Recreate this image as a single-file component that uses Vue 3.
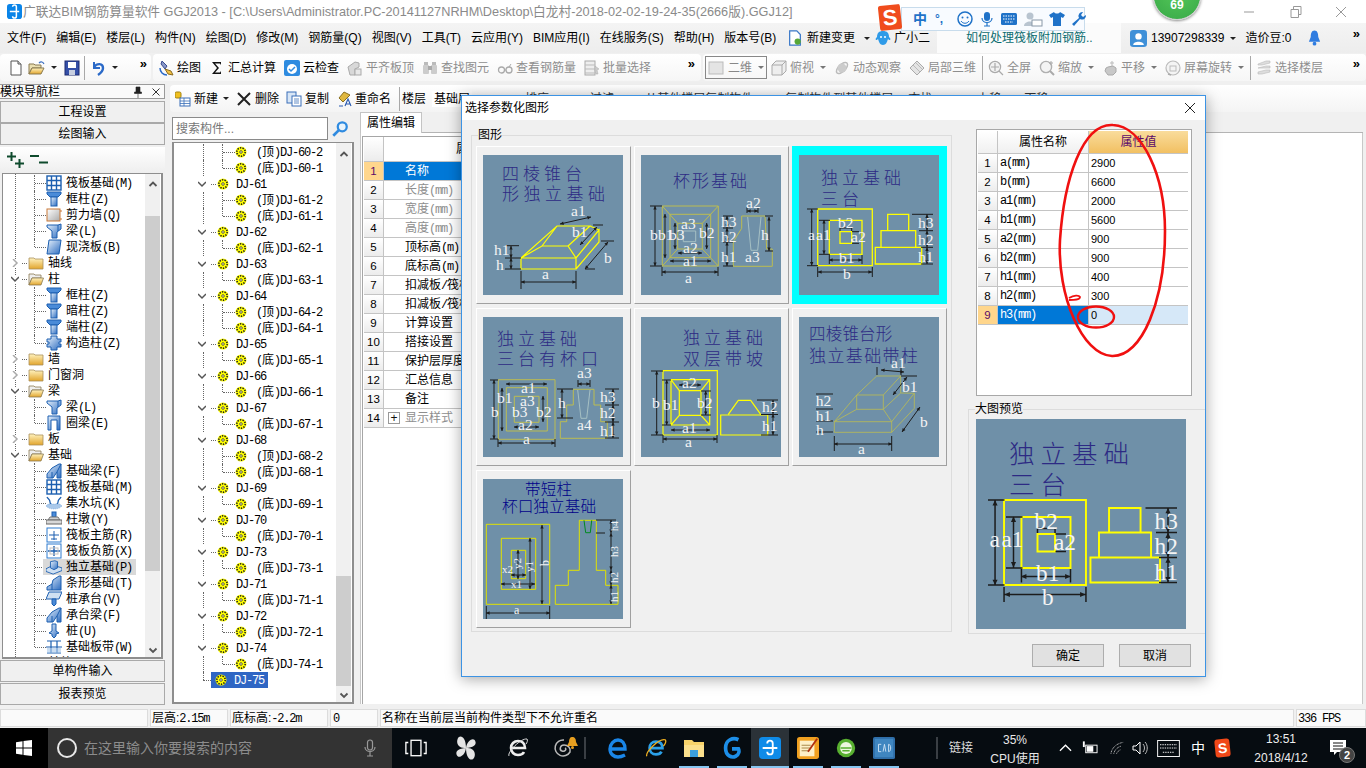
<script setup>
const seg = (s) => (s.match(/[\x00-\x7f]+|[^\x00-\x7f]+/g) || []).map((t) => ({ t, lat: /^[\x00-\x7f]/.test(t) }))

const menus = ['文件(F)', '编辑(E)', '楼层(L)', '构件(N)', '绘图(D)', '修改(M)', '钢筋量(Q)', '视图(V)', '工具(T)', '云应用(Y)', 'BIM应用(I)', '在线服务(S)', '帮助(H)', '版本号(B)']

const tools2 = [
  { ic: 'draw', t: '绘图' }, { ic: 'sum', t: '汇总计算' }, { ic: 'cloud', t: '云检查' },
  { ic: 'flat', t: '平齐板顶', g: 1 }, { ic: 'bino', t: '查找图元', g: 1 }, { ic: 'glass', t: '查看钢筋量', g: 1 }, { ic: 'batch', t: '批量选择', g: 1 }
]
const tools3 = [
  { ic: 'cube', t: '俯视', g: 1, a: 1 }, { ic: 'orbit', t: '动态观察', g: 1 }, { ic: 'local', t: '局部三维', g: 1 }, { sep: 1 },
  { ic: 'full', t: '全屏', g: 1 }, { ic: 'zoom', t: '缩放', g: 1, a: 1 }, { ic: 'pan', t: '平移', g: 1, a: 1 }, { ic: 'rot', t: '屏幕旋转', g: 1, a: 1 }, { sep: 1 },
  { ic: 'layer', t: '选择楼层', g: 1 }
]
const actions = [
  { ic: 'newc', t: '新建', a: 1 }, { ic: 'del', t: '删除' }, { ic: 'copy', t: '复制' }, { ic: 'rename', t: '重命名' }
]
const hiddenActions = [['排序', 47], ['过滤', 35], ['从其他楼层复制构件', 25], ['复制构件到其他楼层', 26], ['查找', 9], ['上移', 39], ['下移', 17]]

const c = (ic, t, extra = {}) => ({ ic, t, child: 1, ...extra })
const f = (t, open) => ({ ic: open ? 'fopen' : 'fclosed', t, open, folder: 1 })
const navRows = [
  c('raft', '筏板基础(M)'), c('col', '框柱(Z)'), c('wall', '剪力墙(Q)'), c('beam', '梁(L)'), c('slab', '现浇板(B)', { last: 1 }),
  f('轴线'), f('柱', 1), c('col', '框柱(Z)'), c('col', '暗柱(Z)'), c('col', '端柱(Z)'), c('gzz', '构造柱(Z)', { last: 1 }),
  f('墙'), f('门窗洞'), f('梁', 1), c('beam', '梁(L)'), c('ring', '圈梁(E)', { last: 1 }), f('板'), f('基础', 1),
  c('fbeam', '基础梁(F)'), c('raft', '筏板基础(M)'), c('pit', '集水坑(K)'), c('pier', '柱墩(Y)'), c('mainbar', '筏板主筋(R)'), c('negbar', '筏板负筋(X)'),
  c('iso', '独立基础(P)', { sel: 1 }), c('strip', '条形基础(T)'), c('cap', '桩承台(V)'), c('fbeam', '承台梁(F)'), c('pile', '桩(U)'), c('band', '基础板带(W)', { last: 1 }),
  f('其他')
]

const djGroups = [
  [60, ['顶2', '底1'], true], [61, ['顶2', '底1']], [62, ['底1']], [63, ['底1']], [64, ['顶2', '底1']], [65, ['底1']], [66, ['底1']], [67, ['底1']],
  [68, ['顶2', '底1']], [69, ['底1']], [70, ['底1']], [73, ['底1']], [71, ['底1']], [72, ['底1']], [74, ['底1']]
]
const djRows = []
for (const [n, kids, noHead] of djGroups) {
  if (!noHead) djRows.push({ t: 'DJ-' + n })
  kids.forEach((k, i) => djRows.push({ t: `(${k[0]})DJ-${n}-${k[1]}`, child: 1, last: i === kids.length - 1 }))
}
djRows.push({ t: 'DJ-75', sel: 1, end: 1 })

const propRows = [
  { t: '名称', sel: 1 }, { t: '长度(mm)', g: 1 }, { t: '宽度(mm)', g: 1 }, { t: '高度(mm)', g: 1 }, { t: '顶标高(m)' }, { t: '底标高(m)' },
  { t: '扣减板/筏板顶部' }, { t: '扣减板/筏板底部' }, { t: '计算设置' }, { t: '搭接设置' }, { t: '保护层厚度' }, { t: '汇总信息' }, { t: '备注' }, { t: '显示样式', g: 1, plus: 1 }
]
const params = [['a(mm)', '2900'], ['b(mm)', '6600'], ['a1(mm)', '2000'], ['b1(mm)', '5600'], ['a2(mm)', '900'], ['b2(mm)', '900'], ['h1(mm)', '400'], ['h2(mm)', '300'], ['h3(mm)', '0']]

const R = (x1, y1, x2, y2) => `M${x1} ${y1}H${x2}V${y2}H${x1}Z`
const P = (...n) => { let s = ''; for (let i = 0; i < n.length; i += 2) s += (i ? 'L' : 'M') + n[i] + ' ' + n[i + 1]; return s }
const arrowPath = (dims) => dims.map(([a, b, x, y]) => {
  const l = Math.hypot(x - a, y - b) || 1, ux = (x - a) / l, uy = (y - b) / l, h = 3.6, w = 1.7
  const tri = (px, py, dx, dy) => `M${px} ${py}L${(px + dx * h - uy * w).toFixed(1)} ${(py + dy * h + ux * w).toFixed(1)}L${(px + dx * h + uy * w).toFixed(1)} ${(py + dy * h - ux * w).toFixed(1)}Z`
  return tri(a, b, ux, uy) + tri(x, y, -ux, -uy)
}).join('')
const linePath = (dims) => dims.map(([a, b, x, y]) => `M${a} ${b}L${x} ${y}`).join('')

const diagrams = [
  {
    title: [['四棱锥台', 19, 25, 17, 4], ['形独立基础', 19, 45, 17, 4.5]], sw: 1.2, col: '#ffff00',
    shape: R(38, 103, 93, 114) + P(93, 114, 116, 87, 116, 75, 93, 103) + P(38, 103, 59, 91, 85, 91, 93, 103) + P(38, 103, 74, 71, 107, 71, 85, 91) + P(59, 91, 74, 71) + P(107, 71, 116, 75),
    ticks: 'M38 116V134M93 116V134M22 90.7H36M22 103H38M22 114H38M110 70H120M102 114H112M118 86H131',
    dims: [[38, 127, 93, 127], [28, 91, 28, 103], [28, 103, 28, 114], [77, 69, 108, 62], [97, 90, 114, 72], [102, 114, 125, 87]],
    labels: [['a1', 88, 61], ['b1', 89, 82], ['h1', 11, 100], ['h', 13, 115], ['a', 59, 124], ['b', 121, 108]]
  },
  {
    title: [['杯形基础', 32, 32, 17, 2]], sw: 1, col: '#bcbc50',
    shape: R(21.3, 51, 77.3, 111) + R(29, 59.3, 69.7, 102.7) + R(36.7, 68.3, 61.3, 94) + 'M21.3 51L36.7 68.3M77.3 51L61.3 68.3M21.3 111L36.7 94M77.3 111L61.3 94' + P(100.7, 61, 124, 61, 125.7, 94, 131.3, 94, 131.3, 111.3, 92.3, 111.3, 92.3, 86.7, 100.7, 73.3, 100.7, 61),
    extra: R(42.3, 76, 54.7, 86.7) + P(106.7, 62, 110, 95.3, 116.7, 95.3, 120, 62), extraCol: '#a6c0c4',
    ticks: 'M9 51H21M9 111H21M21 112V121M77 112V121M82 61H92M82 73H92M82 87H92M82 111H92M124 61H132M124 96H132M106 52V58M117 52V58',
    dims: [[14, 51, 14, 111], [24, 59, 24, 103], [34, 68, 34, 94], [21, 117, 77, 117], [29, 106, 70, 106], [37, 98, 61, 98], [65.7, 68, 65.7, 94], [86, 61, 86, 73], [86, 73, 86, 87], [86, 87, 86, 111], [106, 56, 117, 56], [128, 62, 128, 96]],
    labels: [['b', 9, 85], ['b1', 17, 85], ['b3', 28, 85], ['b2', 58, 83], ['a3', 40, 74], ['a2', 42, 98], ['a1', 42, 111], ['a', 44, 128], ['h3', 80, 72], ['h2', 80, 87], ['h1', 80, 107], ['a2', 105, 53], ['h', 120, 85], ['a3', 104, 107]]
  },
  {
    title: [['独立基础', 22, 29, 17, 4], ['三台', 22, 50, 17, 4]], sw: 1.3, col: '#ffff00',
    shape: R(18.7, 54, 73.3, 110.7) + R(30.3, 65.3, 63, 99.3) + R(41, 76.7, 52.7, 88.3) + R(88.7, 59.3, 109.7, 75.7) + R(82, 75.7, 116.7, 92.3) + R(76.3, 92.3, 122.7, 109),
    ticks: 'M8 54H19M8 110.7H19M20 65.3H31M20 99.3H31M18.7 112V122M73.3 112V122M30.3 100V109M63 100V109M41 72V76M52.7 72V76M41 73H53M53 76.7H60M53 88.3H60M113 59.3H134M120 75.7H134M122 92.3H134M122 109H134',
    dims: [[12.7, 54, 12.7, 110.7], [25, 65, 25, 99], [19, 117, 73, 117], [30, 105, 63, 105], [128, 59.3, 128, 75.7], [128, 75.7, 128, 92.3], [128, 92.3, 128, 109]],
    labels: [['a', 9, 85], ['a1', 17, 85], ['b2', 39, 73], ['a2', 52, 87], ['b1', 40, 108], ['b', 44, 124], ['h3', 119, 73], ['h2', 119, 90], ['h1', 119, 107]]
  },
  {
    title: [['独立基础', 14, 28, 17, 4], ['三台有杯口', 14, 48, 17, 4]], sw: 1, col: '#bcbc50',
    shape: R(15.3, 62.7, 72, 122.3) + R(23.3, 70.7, 64.3, 114) + R(31.3, 79.3, 56, 105.3) + P(90.3, 72.3, 111, 72.3, 111, 88, 117.7, 88, 117.7, 104.7, 124.3, 104.7, 124.3, 121.3, 77.3, 121.3, 77.3, 104.7, 83.7, 104.7, 83.7, 88, 90.3, 88, 90.3, 72.3),
    extra: P(94.7, 73, 98, 101.3, 103.7, 101.3, 107, 73), extraCol: '#a6c0c4',
    ticks: 'M7 63H15M7 122H15M15 122V130M72 122V130M74 72H90M74 101H90M122 72H136M122 88H136M122 105H136M122 121H136M95 63V70M107 63V70',
    dims: [[11, 63, 11, 122], [19, 71, 19, 114], [15, 126, 72, 126], [23, 67, 64, 67], [60, 79, 60, 105], [31, 110, 56, 110], [95, 67, 107, 67], [79, 72, 79, 101], [130, 72, 130, 88], [130, 88, 130, 105], [130, 105, 130, 121]],
    labels: [['a3', 94, 60.7], ['h3', 117, 85], ['h2', 117, 101], ['h1', 117, 119], ['h', 75, 91], ['a4', 94, 113], ['a1', 38, 76], ['b1', 14, 86], ['a3', 37, 89], ['b3', 29, 100], ['b2', 53, 100], ['b', 8, 100], ['a2', 35, 113], ['a', 40, 127]]
  },
  {
    title: [['独立基础', 42, 27, 17, 4], ['双层带坡', 42, 48, 17, 4]], sw: 1.2, col: '#ffff00',
    shape: R(22, 53.7, 76.3, 118) + R(30, 62.7, 68.7, 108) + R(38.3, 73.7, 60, 98.3) + 'M30 62.7L38.3 73.7M68.7 62.7L60 73.7M30 108L38.3 98.3M68.7 108L60 98.3' + R(79.7, 98, 126.7, 118) + P(87.3, 97.3, 97.3, 83.3, 109.7, 83.3, 119.7, 97.3),
    ticks: 'M10 54H22M10 118H22M21 63H30M21 108H30M22 118V126M76 118V126M116 83H137M120 97.5H137M120 118H137M60 74H70M60 98H70',
    dims: [[15.7, 54, 15.7, 118], [25.7, 63, 25.7, 108], [38, 68, 60, 68], [64.7, 74, 64.7, 98], [30, 113, 69, 113], [22, 122, 76, 122], [132, 83, 132, 97], [132, 97, 132, 118]],
    labels: [['b', 11, 91], ['b1', 22, 93], ['a2', 41, 71], ['b2', 56, 91], ['a1', 41, 116], ['a', 44, 130], ['h2', 121, 95], ['h1', 121, 114]]
  },
  {
    title: [['四棱锥台形', 10, 23, 16.5, 0.2], ['独立基础带柱', 10, 45, 17, 1.4]], sw: 0.8, col: '#bcbc50',
    shape: R(35.3, 104.7, 92.7, 115.3) + P(92.7, 115.3, 115.3, 91.3, 115.3, 76.3, 92.7, 104.7) + R(57.7, 78, 84.3, 92.3) + P(57.7, 78, 77.7, 59, 101.7, 59, 84.3, 78) + P(101.7, 59, 101.7, 76, 84.3, 92.3) + P(35.3, 104.7, 57.7, 92.3) + P(92.7, 104.7, 84.3, 92.3) + P(101.7, 76, 115.3, 76.3) + P(35.3, 104.7, 57.7, 78),
    ticks: 'M35.3 119V134M92.7 119V134M17 77H34M17 92H34M17 104H34M17 115H34M78 50V58M102 50V58M102 59H118',
    dims: [[82, 53, 105, 55], [94, 78, 108, 60], [103, 115, 121, 90], [35, 127, 93, 127]],
    labels: [['a1', 92, 50.7], ['b1', 103, 74.7], ['h2', 16.7, 88.7], ['h1', 16.7, 104], ['h', 17, 118], ['b', 121, 110], ['a', 59, 137]]
  },
  {
    title: [['带短柱', 42, 16, 15.5, 0.3], ['杯口独立基础', 19, 32.7, 15.7, 0]], tc: '#000088', sw: 1, col: '#e2e200', mono: 1,
    shape: R(3.3, 45.3, 66.7, 125.3) + R(18.3, 59.3, 52.7, 110.3) + R(28.3, 71.3, 42.7, 99.7) + P(96.3, 41.3, 113.3, 41.3, 113.3, 91.3, 122.7, 91.3, 122.7, 106.3, 135, 106.3, 135, 125.3, 72.3, 125.3, 72.3, 106.3, 85.3, 106.3, 85.3, 91.3, 96.3, 91.3, 96.3, 41.3),
    extra: P(101, 41.3, 102.7, 53.7, 107.3, 53.7, 108.7, 41.3), extraCol: '#008a20',
    ticks: 'M3.3 127V140M66.7 127V140M113 41H133M113 54H122',
    dims: [[59, 46, 59, 125], [47, 59, 47, 110], [35, 71, 35, 100], [18, 105, 52, 105], [28, 96, 43, 96], [3, 134, 67, 134], [128, 41, 128, 54], [128, 54, 128, 91], [128, 91, 128, 106], [128, 106, 128, 125]],
    labels: [['a', 31, 135, 12], ['b', 66, 87, 12, -90], ['y1', 50, 93, 11, -90], ['y2', 38, 90, 11, -90], ['x1', 28, 109, 11], ['x2', 19, 94, 11], ['h4', 135, 52, 10, -90], ['h3', 135, 78, 11, -90], ['h2', 135, 104, 11, -90], ['h1', 135, 123, 11, -90]]
  }
]
diagrams.forEach((d) => { d.linesD = linePath(d.dims) + d.ticks; d.arrowsD = arrowPath(d.dims) })
const preview = diagrams[2]
const lblTransform = (l) => (l[4] ? `rotate(${l[4]} ${l[1]} ${l[2]})` : null)

const trayTime = ['13:51', '2018/4/12']
</script>

<template>
  <div class="screen">
    <svg class="sprite" width="0" height="0" aria-hidden="true">
      <defs>
        <linearGradient id="gFold" x1="0" y1="0" x2="0" y2="1"><stop offset="0" stop-color="#fff3c0" /><stop offset="1" stop-color="#e2a52c" /></linearGradient>
        <linearGradient id="gBlue" x1="0" y1="0" x2="1" y2="1"><stop offset="0" stop-color="#e8f2fc" /><stop offset="1" stop-color="#2c6cc0" /></linearGradient>
        <symbol id="fclosed" viewBox="0 0 16 16"><path d="M1 3h5l1 1h8v10H1z" fill="url(#gFold)" stroke="#a9915a" stroke-width=".8" /></symbol>
        <symbol id="fopen" viewBox="0 0 16 16"><path d="M1 3h5l1 1h6v3H4L1 14z" fill="#eee" stroke="#8a7a50" stroke-width=".8" /><path d="M1 14l3-7h11.5L13 14z" fill="url(#gFold)" stroke="#8a7a50" stroke-width=".8" /></symbol>
        <symbol id="raft" viewBox="0 0 16 16"><rect x="1" y="1" width="14" height="14" fill="#fff" stroke="#1c5fb0" stroke-width="1.4" /><path d="M1 5.500h14M1 10.500h14M5.500 1v14M10.500 1v14" stroke="#1c5fb0" stroke-width="1.4" /></symbol>
        <symbol id="col" viewBox="0 0 16 16"><path d="M1 1h14v2l-3 3H4L1 3z" fill="#4a8bd8" stroke="#1c5fb0" /><rect x="5" y="6" width="6" height="9" fill="url(#gBlue)" stroke="#1c5fb0" /></symbol>
        <symbol id="wall" viewBox="0 0 16 16"><rect x="1" y="2" width="13" height="12" fill="url(#w2)" stroke="#c87838" /><path d="M14 4h2M14 12h2" stroke="#c87838" /><linearGradient id="w2" x1="0" y1="0" x2="1" y2="1"><stop offset="0" stop-color="#fff" /><stop offset="1" stop-color="#aaa" /></linearGradient></symbol>
        <symbol id="beam" viewBox="0 0 16 16"><path d="M1 2h11l3-1v5l-4 3v6H6V8L1 4z" fill="url(#gBlue)" stroke="#1c5fb0" /><path d="M12 2v6" stroke="#1c5fb0" /></symbol>
        <symbol id="slab" viewBox="0 0 16 16"><path d="M3 1h12l-2 14H1z" fill="url(#gBlue)" stroke="#1c5fb0" /></symbol>
        <symbol id="gzz" viewBox="0 0 16 16"><path d="M5 1h6v3h4v3h-2v2h2v3h-4v3H5v-3H1V9h2V7H1V4h4z" fill="url(#gBlue)" stroke="#1c5fb0" /></symbol>
        <symbol id="ring" viewBox="0 0 16 16"><path d="M2 1h12v14h-3V5H5v10H2z" fill="url(#gBlue)" stroke="#1c5fb0" /></symbol>
        <symbol id="fbeam" viewBox="0 0 16 16"><path d="M1 15V11l5-6 7-4 2 0v14h-4V9L7 15z" fill="url(#gBlue)" stroke="#1c5fb0" /><path d="M6 15V9M11 9l4-8" stroke="#1c5fb0" /></symbol>
        <symbol id="pit" viewBox="0 0 16 16"><path d="M1 2c1 2 3 2 3 5s2 3 4 3 4 0 4-3 2-3 3-5" fill="none" stroke="#1c5fb0" stroke-width="1.3" /><path d="M0 11c3 4 13 4 16 0l-2-2H2z" fill="#a9c8ea" stroke="#5a92d0" stroke-width=".5" stroke-dasharray="1 1" /></symbol>
        <symbol id="pier" viewBox="0 0 16 16"><rect x="6" y="1" width="4" height="5" fill="#4a8bd8" stroke="#1c5fb0" /><path d="M4 6h8l2 3H2z" fill="#d0d0d0" stroke="#777" /><rect x="0" y="9" width="16" height="4" fill="#d8d8d8" stroke="#666" /></symbol>
        <symbol id="mainbar" viewBox="0 0 16 16"><rect x="1" y="1" width="14" height="14" fill="#fff" stroke="#2f7cd0" /><path d="M3 8h10M8 4v9M5 12h6" stroke="#1c5fb0" /></symbol>
        <symbol id="negbar" viewBox="0 0 16 16"><rect x="1" y="1" width="14" height="14" fill="#fff" stroke="#2f7cd0" /><path d="M2 8h12M8 3v10" stroke="#1c5fb0" stroke-width="1.4" /><rect x="4" y="5" width="8" height="6" fill="none" stroke="#c0c0c0" /></symbol>
        <symbol id="iso" viewBox="0 0 18 16"><path d="M0 10l8-4 10 3v3l-10 4-8-3z" fill="#cfe0f2" stroke="#1c5fb0" /><path d="M5 2l5-1 3 1v7l-4 2-4-2z" fill="url(#gBlue)" stroke="#1c5fb0" /></symbol>
        <symbol id="strip" viewBox="0 0 16 16"><path d="M1 15v-3l5-3 1-4 6-4h2v14z" fill="url(#gBlue)" stroke="#1c5fb0" /><path d="M6 9v6" stroke="#1c5fb0" /></symbol>
        <symbol id="cap" viewBox="0 0 16 16"><path d="M3 1h13l-3 7H0z" fill="#cfe0f2" stroke="#1c5fb0" /><path d="M6 8h4v5l-2 2-2-2z" fill="#4a8bd8" stroke="#1c5fb0" /></symbol>
        <symbol id="pile" viewBox="0 0 16 16"><path d="M6 1h4v7l3 2-3 1v2l-2 2-2-2v-2l-3-1 3-2z" fill="url(#gBlue)" stroke="#1c5fb0" /></symbol>
        <symbol id="band" viewBox="0 0 16 16"><path d="M1 2h14M1 14h14M0 8h16M5 2v12M11 2v12" stroke="#1c5fb0" stroke-width="1.2" /><rect x="1" y="9" width="14" height="5" fill="#a9c8ea" opacity=".6" /></symbol>
        <symbol id="gear" viewBox="0 0 12 12"><circle cx="6" cy="6" r="5.500" fill="#ff0" /><circle cx="6" cy="6" r="4.200" fill="none" stroke="#222" stroke-width="1.600" stroke-dasharray="1.400 1.200" /><circle cx="6" cy="6" r="1.300" fill="#ffb" stroke="#222" stroke-width=".7" /></symbol>

        <symbol id="new" viewBox="0 0 16 16"><path d="M3 1h7l3 3v11H3z" fill="#fff" stroke="#555" /><path d="M10 1v3h3" fill="#ddd" stroke="#555" /></symbol>
        <symbol id="open" viewBox="0 0 18 16"><path d="M1 4h5l1 1h6v3H4L1 14z" fill="#eadfb0" stroke="#8a7a50" /><path d="M1 14l3-6h12l-3 6z" fill="url(#gFold)" stroke="#8a7a50" /><path d="M11 3c2-2 4-1 5 1" fill="none" stroke="#3a6ec0" stroke-width="1.2" /></symbol>
        <symbol id="save" viewBox="0 0 16 16"><rect x="1" y="1" width="14" height="14" fill="#3550a8" stroke="#1c2a70" /><rect x="4" y="2" width="8" height="6" fill="#fff" /><rect x="5" y="10" width="6" height="5" fill="#c8cfe0" /></symbol>
        <symbol id="undo" viewBox="0 0 16 16"><path d="M3 2v6h6" fill="none" stroke="#2b6ac8" stroke-width="2" /><path d="M3 7c3-4 9-4 9 1 0 3-2 5-5 7" fill="none" stroke="#2b6ac8" stroke-width="2.4" /></symbol>
        <symbol id="draw" viewBox="0 0 16 16"><path d="M4 1l5 5-2 3-4-5z" fill="#8898c8" stroke="#3a4a90" /><path d="M7 9l6 2 2 4-5-1z" fill="#f2c040" stroke="#8a6a20" /><path d="M2 8c0 4 3 7 7 7" fill="none" stroke="#2b6ac8" stroke-width="1.500" /></symbol>
        <symbol id="sum" viewBox="0 0 16 16"><path d="M3 2h9v3l-1-1.500H6l4 4.500-4 4.500h5l1-1.500v3H3l5-6z" fill="#111" /></symbol>
        <symbol id="cloud" viewBox="0 0 16 16"><rect x="0" y="0" width="16" height="16" rx="2" fill="#2e8be0" /><circle cx="8" cy="9" r="5" fill="#fff" /><path d="M5 9l2 2 4-4" fill="none" stroke="#2e8be0" stroke-width="1.500" /></symbol>
        <symbol id="flat" viewBox="0 0 16 16"><path d="M1 7l7-5 4 1v4l-4 2v6H3z" fill="#d8d8d8" stroke="#aaa" /><rect x="8" y="9" width="6" height="6" fill="#e8e8e8" stroke="#aaa" /></symbol>
        <symbol id="bino" viewBox="0 0 16 16"><rect x="2" y="2" width="4" height="3" fill="#bbb" /><rect x="10" y="2" width="4" height="3" fill="#bbb" /><rect x="1" y="5" width="6" height="9" rx="1" fill="#ccc" /><rect x="9" y="5" width="6" height="9" rx="1" fill="#ccc" /><rect x="6" y="6" width="4" height="4" fill="#aaa" /></symbol>
        <symbol id="glass" viewBox="0 0 16 16"><circle cx="4.500" cy="10" r="3" fill="none" stroke="#aaa" stroke-width="1.300" /><circle cx="12" cy="10" r="3" fill="none" stroke="#aaa" stroke-width="1.300" /><path d="M7 10h2M12 7l2-3" stroke="#aaa" /></symbol>
        <symbol id="batch" viewBox="0 0 16 16"><rect x="1" y="1" width="10" height="14" fill="#eee" stroke="#aaa" /><path d="M1 5h10M1 9h10M1 13h10" stroke="#bbb" /><path d="M11 6l4 3-2 1 1 4-2 0-1-3z" fill="#ccc" stroke="#aaa" stroke-width=".5" /></symbol>
        <symbol id="square" viewBox="0 0 16 16"><rect x="1" y="2" width="14" height="12" fill="#e4e4e4" stroke="#bbb" /></symbol>
        <symbol id="cube" viewBox="0 0 16 16"><path d="M1 5l4-4h10v10l-4 4H1z" fill="#eee" stroke="#aaa" /><path d="M1 5h10v10M11 5l4-4" fill="none" stroke="#aaa" /></symbol>
        <symbol id="orbit" viewBox="0 0 16 16"><ellipse cx="8" cy="8" rx="7" ry="3.500" transform="rotate(-45 8 8)" fill="none" stroke="#bbb" stroke-width="1.500" /><circle cx="8" cy="8" r="4.500" fill="#ccc" /></symbol>
        <symbol id="local" viewBox="0 0 16 16"><path d="M1 8l7-7 7 7-7 7z" fill="#e4e4e4" stroke="#aaa" /><path d="M4 5l7 7M7 3l6 6" stroke="#bbb" /></symbol>
        <symbol id="full" viewBox="0 0 16 16"><circle cx="7" cy="7" r="5.600" fill="#f2f2f2" stroke="#aaa" stroke-width="1.200" /><path d="M7 3v8M3 7h8M11 11l4 4" stroke="#aaa" stroke-width="1.200" /></symbol>
        <symbol id="zoom" viewBox="0 0 16 16"><circle cx="7" cy="7" r="5.600" fill="#f4f4f4" stroke="#b0b0b0" stroke-width="1.400" /><path d="M11 11l4 4" stroke="#aaa" stroke-width="2" /><path d="M12 1v4M10 3h4" stroke="#aaa" /></symbol>
        <symbol id="pan" viewBox="0 0 16 16"><path d="M4 8l2-1 5-1 3 2v4l-3 3H6l-3-4z" fill="#c8c8c8" stroke="#aaa" /><path d="M10 1v5M8 3h4" stroke="#bbb" /></symbol>
        <symbol id="rot" viewBox="0 0 16 16"><circle cx="8" cy="8" r="7" fill="#f4f4f4" stroke="#bbb" stroke-width="1.200" /><rect x="5" y="6" width="6" height="5" fill="none" stroke="#bbb" /><path d="M3 14l3 1" stroke="#aaa" stroke-width="1.400" /></symbol>
        <symbol id="layer" viewBox="0 0 16 16"><path d="M2 4l8-3 4 0v2L6 5H2zM2 8l8-2h4v2H6zM2 12l8-2h4v2l-8 2H2z" fill="#ddd" stroke="#bbb" stroke-width=".6" /></symbol>
        <symbol id="newc" viewBox="0 0 16 16"><rect x="0" y="1" width="6" height="6" rx="1.500" fill="#f0c020" stroke="#a08010" /><rect x="5" y="7" width="10" height="8" fill="#fff" stroke="#3a6eb8" /><path d="M5 10h10M5 12.500h10M9 7v8" stroke="#3a6eb8" stroke-width=".8" /></symbol>
        <symbol id="del" viewBox="0 0 16 16"><path d="M2 2l12 12M14 2L2 14" stroke="#222" stroke-width="2" /></symbol>
        <symbol id="copy" viewBox="0 0 16 16"><rect x="1" y="1" width="9" height="11" fill="#d8e6f6" stroke="#3a6eb8" /><rect x="6" y="5" width="9" height="10" fill="#fff" stroke="#3a6eb8" /><path d="M8 8h5M8 10h5M8 12h5" stroke="#3a6eb8" stroke-width=".8" /></symbol>
        <symbol id="rename" viewBox="0 0 16 16"><path d="M8 1l6 3-7 7-4-4z" fill="#e0b840" stroke="#8a7020" /><path d="M3 15h4M9 15l3-7 3 7M10 13h4" stroke="#2a5ab0" fill="none" stroke-width="1.100" /></symbol>
        <symbol id="search" viewBox="0 0 16 16"><circle cx="10" cy="6" r="4" fill="#e8f4fc" stroke="#2f8be0" stroke-width="2" /><path d="M7 9l-5 5" stroke="#2f8be0" stroke-width="2.400" /></symbol>
        <symbol id="arrUp" viewBox="0 0 10 12"><path d="M1.500 8l3.500-3.500L8.500 8" fill="none" stroke="#555" stroke-width="1.800" /></symbol>
        <symbol id="arrDn" viewBox="0 0 10 12"><path d="M1.500 4.500L5 8l3.500-3.500" fill="none" stroke="#555" stroke-width="1.800" /></symbol>
      </defs>
    </svg>

    <header class="titlebar">
      <svg class="appicon" viewBox="0 0 16 16"><rect x="0" y="0" width="16" height="16" rx="3" fill="#0a84e8" /><path d="M6 3a2 2 0 0 1 4 0v10a2 2 0 0 1-4 0M3 8h10" fill="none" stroke="#fff" stroke-width="1.600" /></svg>
      <span class="title">广联达BIM钢筋算量软件 GGJ2013 - [C:\Users\Administrator.PC-20141127NRHM\Desktop\白龙村-2018-02-02-19-24-35(2666版).GGJ12]</span>
      <div class="winctl">
        <svg viewBox="0 0 46 20"><path d="M18 10h10" stroke="#999" /></svg>
        <svg viewBox="0 0 46 20"><path d="M19 7.500h7.500v8H19zM21.500 7V4.500H29v8h-2.500" fill="none" stroke="#999" /></svg>
        <svg viewBox="0 0 46 20"><path d="M18 5l10 10M28 5L18 15" stroke="#999" /></svg>
      </div>
    </header>

    <nav class="menubar">
      <div class="menu-main"><span v-for="m in menus" :key="m">{{ m }}</span></div>
      <div class="menu-ext change">
        <svg class="ic" viewBox="0 0 16 18"><path d="M2 1h8l4 4v12H2z" fill="#fff" stroke="#3a78c8" stroke-width="1.400" /><circle cx="11" cy="13" r="3.500" fill="#58a838" /></svg>
        <span>新建变更</span><i class="caret"></i>
      </div>
      <div class="menu-ext helper">
        <svg class="ic" viewBox="0 0 16 16"><path d="M8 1c4 0 6 2 6 6 1 1 2 2 1 3-1 0-1 0-2-1-1 3-2 6-5 6s-4-3-5-6c-1 1-1 1-2 1-1-1 0-2 1-3 0-4 2-6 6-6z" fill="#2f9be8" /><circle cx="6" cy="7" r="1" fill="#fff" /><circle cx="10" cy="7" r="1" fill="#fff" /></svg>
        <span>广小二</span>
      </div>
      <div class="ad">如何处理筏板附加钢筋..</div>
      <div class="user">
        <svg class="uicon" viewBox="0 0 16 16"><rect width="16" height="16" rx="3" fill="#3f90d8" /><circle cx="8" cy="6" r="3" fill="#fff" /><path d="M3 14c0-4 10-4 10 0z" fill="#fff" /></svg>
        <span class="phone">13907298339</span><i class="caret"></i>
        <span class="beans">造价豆:0</span>
        <svg class="bell" viewBox="0 0 16 18"><path d="M8 1c3 0 4 3 4 7l2 5H2l2-5c0-4 1-7 4-7z" fill="#2f7ce0" /><circle cx="8" cy="15" r="2" fill="#2f7ce0" /></svg>
      </div>
      <span class="more end">»</span>
    </nav>

    <div class="toolbar">
      <div class="tgroup g1">
        <svg class="ic new"><use href="#new" /></svg>
        <svg class="ic wide open"><use href="#open" /></svg><i class="caret"></i>
        <svg class="ic save"><use href="#save" /></svg>
        <span class="sep"></span>
        <svg class="ic undo"><use href="#undo" /></svg><i class="caret"></i>
        <span class="more">»</span>
      </div>
      <div class="tgroup g2">
        <div v-for="x in tools2" :key="x.t" class="tool" :class="{ gray: x.g }"><svg class="ic"><use :href="'#' + x.ic" /></svg><span>{{ x.t }}</span></div>
        <span class="more">»</span>
      </div>
      <div class="tgroup g3">
        <div class="combo"><svg class="ic"><use href="#square" /></svg><span>二维</span><i class="caret gray"></i></div>
        <template v-for="(x, i) in tools3" :key="i">
          <span v-if="x.sep" class="sep"></span>
          <div v-else class="tool gray"><svg class="ic"><use :href="'#' + x.ic" /></svg><span>{{ x.t }}</span><i v-if="x.a" class="caret gray"></i></div>
        </template>
        <span class="more end">»</span>
      </div>
    </div>

    <main class="body">
      <aside class="left">
        <div class="navhead">
          <span>模块导航栏</span>
          <span class="navbtns">
            <svg viewBox="0 0 10 12"><path d="M3 1h4v5h1.500v1.500h-7V6H3zM5 7.500V12" fill="#222" stroke="#222" stroke-width=".6" /></svg>
            <svg viewBox="0 0 10 12"><path d="M1.500 2.500l7 7M8.500 2.500l-7 7" stroke="#333" /></svg>
          </span>
        </div>
        <button class="navbtn first">工程设置</button>
        <button class="navbtn">绘图输入</button>
        <div class="plusbar">
          <svg viewBox="0 0 18 18"><path d="M4.500 1v9M0 5.500h9M12.500 8v9M8 12.500h9" stroke="#0e4a2c" stroke-width="2" /></svg>
          <svg viewBox="0 0 18 18"><path d="M0 5h9M9 11.500h9" stroke="#0e4a2c" stroke-width="2" /></svg>
        </div>
        <div class="treeframe navtree">
          <div class="rows">
            <span class="trunk"></span>
            <div v-for="(r, i) in navRows" :key="i" class="nrow" :class="{ child: r.child, last: r.last, sel: r.sel, folder: r.folder }">
              <template v-if="r.folder">
                <svg class="chev" viewBox="0 0 8 8"><path :d="r.open ? 'M0 2l4 4 4-4' : 'M2 0l4 4-4 4'" fill="none" :stroke="r.open ? '#555' : '#aaa'" stroke-width="1.500" /></svg>
                <span class="hdot short"></span>
              </template>
              <span v-else class="hdot"></span>
              <span class="lbl">
                <svg class="ic"><use :href="'#' + r.ic" /></svg>
                <span class="txt"><span v-for="(s, j) in seg(r.t)" :key="j" :class="{ lat: s.lat }">{{ s.t }}</span></span>
              </span>
            </div>
          </div>
          <div class="vbar navbar">
            <svg class="up"><use href="#arrUp" /></svg><span class="thumb"></span><svg class="dn"><use href="#arrDn" /></svg>
          </div>
        </div>
        <button class="navbtn b1">单构件输入</button>
        <button class="navbtn">报表预览</button>
      </aside>

      <section class="work">
        <div class="actions">
          <div v-for="x in actions" :key="x.t" class="tool"><svg class="ic"><use :href="'#' + x.ic" /></svg><span>{{ x.t }}</span><i v-if="x.a" class="caret"></i></div>
          <span class="sep"></span>
          <span class="lay">楼层</span><span class="layv">基础层</span>
          <span v-for="h in hiddenActions" :key="h[0]" class="hact" :style="{ marginLeft: h[1] + 'px' }">{{ h[0] }}</span>
        </div>
        <div class="workrow">
          <div class="mid">
            <div class="searchrow"><span class="searchbox">搜索构件...</span><svg class="ic sbtn"><use href="#search" /></svg></div>
            <div class="treeframe djtree">
              <div class="rows">
                <div v-for="(r, i) in djRows" :key="i" class="drow" :class="{ child: r.child, last: r.last, sel: r.sel, end: r.end }">
                  <svg v-if="!r.child && !r.end" class="chev" viewBox="0 0 8 8"><path d="M0 2l4 4 4-4" fill="none" stroke="#555" stroke-width="1.500" /></svg>
                  <span class="hdot"></span>
                  <span class="lbl">
                    <svg class="gear"><use href="#gear" /></svg>
                    <span class="txt"><span v-for="(s, j) in seg(r.t)" :key="j" :class="{ lat: s.lat }">{{ s.t }}</span></span>
                  </span>
                </div>
              </div>
              <div class="vbar djbar"><svg class="up"><use href="#arrUp" /></svg><span class="thumb"></span><svg class="dn"><use href="#arrDn" /></svg></div>
            </div>
          </div>
          <div class="props">
            <div class="tabs"><span class="tab">属性编辑</span></div>
            <div class="pgrid">
              <div class="phead"><span class="pno"></span><span class="pname">属性名称</span></div>
              <div v-for="(r, i) in propRows" :key="i" class="prow" :class="{ sel: r.sel }">
                <span class="pno" :class="{ on: r.sel }">{{ i + 1 }}</span>
                <span class="pname" :class="{ gray: r.g }"><i v-if="r.plus" class="plus">+</i><span v-for="(s, j) in seg(r.t)" :key="j" :class="{ lat: s.lat }">{{ s.t }}</span></span>
              </div>
            </div>
          </div>
        </div>
      </section>
    </main>

    <footer class="status">
      <span class="cell s1"></span>
      <span class="cell s2"><span>层高:</span><span class="lat">2.15m</span></span>
      <span class="cell s3"><span>底标高:</span><span class="lat">-2.2m</span></span>
      <span class="cell s4"><span class="lat">0</span></span>
      <span class="cell s5">名称在当前层当前构件类型下不允许重名</span>
      <span class="cell s6"><span class="lat">336 FPS</span></span>
    </footer>

    <div class="taskbar">
      <div class="start"><svg viewBox="0 0 16 16"><path d="M0 2.200L6.500 1.300V7.500H0zM7.500 1.100L16 0V7.500H7.500zM0 8.500H6.500V14.700L0 13.800zM7.500 8.500H16V16L7.500 14.900z" fill="#fff" /></svg></div>
      <div class="tsearch">
        <span class="ring"></span><span class="ph">在这里输入你要搜索的内容</span>
        <svg class="mic" viewBox="0 0 12 18"><rect x="3.500" y="1" width="5" height="10" rx="2.500" fill="none" stroke="#999" stroke-width="1.200" /><path d="M1 8c0 6 10 6 10 0M6 13v4M3 17h6" fill="none" stroke="#999" stroke-width="1.200" /></svg>
      </div>
      <div class="apps">
        <span class="app taskview"><svg viewBox="0 0 20 16"><rect x="5.500" y="1" width="9" height="14" fill="none" stroke="#fff" stroke-width="1.200" /><path d="M3 3H.8v10H3M17 3h2.200v10H17" fill="none" stroke="#fff" stroke-width="1.200" /></svg></span>
        <span class="app fan"><svg viewBox="0 0 22 26"><path d="M11 13C3 14 0 8 2 3s9-3 9 10zM11 13c8-1 11 5 9 10s-9 3-9-10zM11 13c1-8 7-11 9-9s4 8-9 9zM11 13c-1 8-7 11-9 9s-4-8 9-9z" fill="#e4e4e4" /></svg></span>
        <span class="app ie"><svg viewBox="0 0 22 24"><path d="M4 12h14c0-5-3-7-7-7s-7 3-7 7 3 7 7 7c3 0 5-1 6-3" fill="none" stroke="#eee" stroke-width="2.600" /><path d="M2 20C0 16 14 2 20 3c1 1 0 4-1 5" fill="none" stroke="#ddd" stroke-width="1" /></svg></span>
        <span class="app spiral"><svg viewBox="0 0 28 26"><path d="M12 5a8 8 0 1 0 6 12c1-4-2-7-6-7s-5 5-2 6 5-2 3-3" fill="none" stroke="#bbb" stroke-width="1.500" /><path d="M20 2c3 0 4 2 4 5l2 4H15l2-4c0-3 1-5 3-5z" fill="#e8a020" /><circle cx="20.500" cy="12.500" r="1.500" fill="#e8a020" /></svg></span>
        <span class="tsep"></span>
        <span class="app edge"><svg viewBox="0 0 22 24"><path d="M4 13h14c0-6-3-9-7-9s-8 4-8 9 4 8 8 8c3 0 5-1 7-2" fill="none" stroke="#1a86e8" stroke-width="3.400" /></svg></span>
        <span class="app ie2"><svg viewBox="0 0 24 24"><path d="M5 12h14c0-5-3-7-7-7s-7 3-7 7 3 7 7 7c3 0 5-1 6-3" fill="none" stroke="#2ba0e8" stroke-width="3" /><path d="M2 21C0 17 15 1 22 3c2 2-1 6-2 7" fill="none" stroke="#f0b020" stroke-width="1.400" /></svg></span>
        <span class="app run folder"><svg viewBox="0 0 22 20"><path d="M1 2h8l2 2h10v15H1z" fill="#f7d36a" /><rect x="1" y="7" width="20" height="12" fill="#fbe08c" /><rect x="7" y="12" width="8" height="7" fill="#3ca0dc" /></svg></span>
        <span class="app run gapp"><svg viewBox="0 0 24 26"><path d="M19 4C13 1 5 4 5 13s7 11 11 9 4-6 3-8h-7" fill="none" stroke="#1d8fe8" stroke-width="4" /></svg></span>
        <span class="app run active plusapp"><svg viewBox="0 0 24 24"><rect width="24" height="24" rx="4" fill="#0f8be8" /><path d="M9 7a3 3 0 0 1 6 0v9a3 3 0 0 1-6 0M4 12h16" fill="none" stroke="#fff" stroke-width="2" /></svg></span>
        <span class="app run note"><svg viewBox="0 0 24 24"><rect width="24" height="24" rx="3" fill="#f0a020" /><rect x="3" y="4" width="16" height="17" fill="#fdf0c8" /><path d="M5 9h10M5 12h10M5 15h8" stroke="#a08040" /><path d="M22 2L12 16" stroke="#b03010" stroke-width="2" /></svg></span>
        <span class="app run green"><svg viewBox="0 0 24 24"><circle cx="12" cy="12" r="10" fill="#58b030" /><circle cx="12" cy="12" r="6.500" fill="#eef8e0" /><path d="M6 12h12M8 15h8" stroke="#58b030" stroke-width="1.600" /></svg></span>
        <span class="app run cad"><svg viewBox="0 0 24 24"><rect width="24" height="24" rx="2" fill="#2f6ea8" /><rect x="2" y="2" width="20" height="20" fill="#3f86c0" /><path d="M9 8H6v8h3M11 16l1.500-8L14 16M17 8v8c3 0 3-8 0-8z" fill="none" stroke="#cfe4f4" /></svg></span>
      </div>
      <div class="tray">
        <span class="tsep2"></span>
        <span class="link">链接</span>
        <span class="cpu"><span>35%</span><span>CPU使用</span></span>
        <svg class="tr chevup" viewBox="0 0 14 8"><path d="M1 7l6-6 6 6" fill="none" stroke="#fff" stroke-width="1.400" /></svg>
        <svg class="tr bat" viewBox="0 0 18 14"><rect x="5" y="4" width="12" height="8" fill="none" stroke="#fff" /><rect x="6" y="5" width="7" height="6" fill="#fff" /><path d="M3 0v6" stroke="#fff" stroke-width="2" /></svg>
        <svg class="tr wifi" viewBox="0 0 16 14"><path d="M1 13C2 6 8 2 14 1M4 13c1-4 4-7 8-8M7 13c1-2 2-3 4-4" fill="none" stroke="#ccc" stroke-dasharray="1 .7" /></svg>
        <svg class="tr vol" viewBox="0 0 16 14"><path d="M1 5h3l4-4v12L4 9H1z" fill="none" stroke="#fff" /><path d="M11 3c2 2 2 6 0 8M13 1c3 3 3 9 0 12" fill="none" stroke="#bbb" /></svg>
        <svg class="tr kbd" viewBox="0 0 24 18"><rect x=".5" y=".5" width="23" height="17" fill="none" stroke="#fff" /><path d="M3 5h18M3 8.500h18M6 13h12" stroke="#fff" stroke-dasharray="1.500 1" /></svg>
        <span class="ime">中</span>
        <span class="traysg"><b>S</b></span>
        <span class="clock"><span>{{ trayTime[0] }}</span><span>{{ trayTime[1] }}</span></span>
        <span class="notif"><svg viewBox="0 0 16 16"><path d="M0 0h16v12H7l-3 3v-3H0z" fill="#fff" /><path d="M3 3h10M3 6h10M3 9h10" stroke="#111" /></svg><b>2</b></span>
      </div>
    </div>

    <!-- floating desktop pieces -->
    <div class="ball"><span>69</span></div>
    <div class="imebar">
      <span class="sg"><b>S</b></span>
      <div class="imepanel">
        <span class="zh">中</span><span class="pun">°,</span>
        <svg viewBox="0 0 16 16"><circle cx="8" cy="8" r="7" fill="none" stroke="#1f72c8" stroke-width="1.500" /><circle cx="5.500" cy="6.500" r="1" fill="#1f72c8" /><circle cx="10.500" cy="6.500" r="1" fill="#1f72c8" /><path d="M4 10c2 3 6 3 8 0" fill="none" stroke="#1f72c8" /></svg>
        <svg viewBox="0 0 16 16"><rect x="5" y="1" width="6" height="9" rx="3" fill="#1f72c8" /><path d="M3 7c0 6 10 6 10 0M8 12v3M5 15h6" fill="none" stroke="#1f72c8" stroke-width="1.200" /></svg>
        <svg viewBox="0 0 16 16"><rect x="0" y="2" width="16" height="12" rx="1.500" fill="#1f72c8" /><path d="M2 5h12M2 8h12M4 11h8" stroke="#fff" stroke-dasharray="1.500 1" /></svg>
        <svg class="wide" viewBox="0 0 20 16"><circle cx="7" cy="5" r="3.500" fill="#b8c4d0" /><path d="M1 15c0-6 12-6 12 0z" fill="#b8c4d0" /><rect x="9" y="9" width="10" height="6" fill="#fff" stroke="#8898a8" /></svg>
        <svg viewBox="0 0 16 16"><path d="M5 1L0 4l2 3 2-1v9h8V6l2 1 2-3-5-3c-1 2-5 2-6 0z" fill="#1f72c8" /></svg>
        <svg viewBox="0 0 16 16"><path d="M15 4a4 4 0 0 1-6 4l-6 7-2-2 7-6a4 4 0 0 1 4-6l-2 3 2 2z" fill="#1f72c8" /></svg>
      </div>
    </div>

    <div class="dialog">
      <div class="dtitle"><span>选择参数化图形</span><svg viewBox="0 0 12 12"><path d="M1 1l10 10M11 1L1 11" stroke="#222" /></svg></div>
      <div class="dbody">
        <div class="dleft">
          <span class="legend">图形</span>
          <div class="cards">
            <div v-for="(d, i) in diagrams" :key="i" class="card" :class="{ picked: i === 2 }">
              <svg class="pic" viewBox="0 0 140 140">
                <text v-for="t in d.title" :key="t[0]" class="ttl" :x="t[1]" :y="t[2]" :font-size="t[3]" :letter-spacing="t[4]" :fill="d.tc || '#2d2a84'">{{ t[0] }}</text>
                <path :d="d.shape" fill="none" :stroke="d.col" :stroke-width="d.sw" />
                <path v-if="d.extra" :d="d.extra" fill="none" :stroke="d.extraCol" :stroke-width="d.sw" />
                <path :d="d.linesD" fill="none" stroke="#1c1c1c" stroke-width="1" />
                <path :d="d.arrowsD" fill="#1c1c1c" />
                <text v-for="(l, j) in d.labels" :key="j" class="dl" :x="l[1]" :y="l[2]" :font-size="l[3] || 15.5" :transform="lblTransform(l)">{{ l[0] }}</text>
              </svg>
            </div>
          </div>
        </div>
        <div class="dright">
          <div class="pframe">
            <div class="phdr"><span class="n"></span><span class="k">属性名称</span><span class="v">属性值</span></div>
            <div v-for="(p, i) in params" :key="p[0]" class="prm" :class="{ cur: i === 8 }">
              <span class="n">{{ i + 1 }}</span>
              <span class="k lat">{{ p[0] }}</span>
              <span class="v">{{ p[1] }}</span>
            </div>
          </div>
          <div class="prevbox">
            <span class="legend">大图预览</span>
            <svg class="bigpic" viewBox="0 0 140 140">
              <text v-for="t in preview.title" :key="t[0]" class="ttl" :x="t[1]" :y="t[2]" :font-size="t[3]" :letter-spacing="t[4]" fill="#2d2a84">{{ t[0] }}</text>
              <path :d="preview.shape" fill="none" stroke="#ffff00" stroke-width="1.300" />
              <path :d="preview.linesD" fill="none" stroke="#1c1c1c" stroke-width="1" />
              <path :d="preview.arrowsD" fill="#1c1c1c" />
              <text v-for="(l, j) in preview.labels" :key="j" class="dl" :x="l[1]" :y="l[2]" font-size="15.500">{{ l[0] }}</text>
            </svg>
          </div>
        </div>
      </div>
      <div class="dfoot"><button>确定</button><button>取消</button></div>
    </div>

    <svg class="redmarks" viewBox="0 0 140 250">
      <path d="M59 5C28 3 10 60 6 120c-3 55 22 115 52 116 30 1 53-55 53-125C111 55 88 6 59 5z" fill="none" stroke="#f01010" stroke-width="2.600" />
      <ellipse cx="42" cy="197" rx="18" ry="10.500" fill="none" stroke="#f01010" stroke-width="2.400" />
      <path d="M15 178c5-3 10-3 11-1 0 3-6 3-11 3" fill="none" stroke="#f01010" stroke-width="1.800" />
    </svg>
  </div>
</template>

<style>
html, body { margin: 0; background: #f0f0f0; }
</style>

<style scoped>
* { box-sizing: border-box; }
.screen { position: relative; width: 1366px; height: 768px; overflow: hidden; display: flex; flex-direction: column; background: #f0f0f0; color: #000; font: 12px "Liberation Sans", "Noto Sans CJK SC", sans-serif; line-height: 16px; }
.sprite { display: block; position: absolute; }
.lat { font-family: "Liberation Mono", monospace; letter-spacing: -1.2px; }
.ic { width: 16px; height: 16px; flex: none; display: block; }
.ic.wide { width: 18px; }
.gray { color: #8e8e8e; }
button { font: inherit; color: inherit; }

.caret { display: block; flex: none; width: 0; height: 0; border: 3px solid transparent; border-top: 3px solid #222; border-bottom: 0; }
.caret.gray { border-top-color: #777; }
.more { font-size: 13px; line-height: 12px; font-weight: bold; margin-left: auto; margin-top: -8px; }
.sep { width: 1px; height: 24px; background: #a8a8a8; flex: none; }

.titlebar { height: 23px; flex: none; display: flex; align-items: center; background: #fff; padding-left: 7px; }
.appicon { width: 15px; height: 15px; flex: none; }
.title { margin-left: 1px; color: #8a8a8a; font-size: 12.720px; white-space: nowrap; }
.winctl { margin-left: auto; margin-right: 2px; display: flex; }
.winctl svg { width: 46px; height: 20px; display: block; }

.menubar { height: 30px; flex: none; display: flex; align-items: center; position: relative; background: linear-gradient(#f4f4f4, #ededed); }
.menu-main { width: 787px; flex: none; display: flex; gap: 10px; padding-left: 7px; white-space: nowrap; }
.menu-ext { display: flex; align-items: center; flex: none; }
.change { width: 88px; gap: 4px; }
.change .caret { margin-left: 5px; }
.helper { gap: 3px; width: 62px; }
.ad { width: 184px; height: 30px; background: #fbfbfb; line-height: 30px; padding-left: 29px; color: #0a6c70; white-space: nowrap; flex: none; }
.user { margin-left: 9px; display: flex; align-items: center; }
.uicon { width: 17px; height: 17px; display: block; }
.phone { margin-left: 4px; }
.user .caret { margin-left: 6px; }
.beans { margin-left: 9px; }
.bell { width: 15px; height: 18px; margin-left: 16px; display: block; }
.more.end { margin-left: auto; margin-right: 6px; }

.toolbar { height: 30px; flex: none; display: flex; gap: 2px; padding-top: 1px; }
.tgroup { height: 27px; display: flex; align-items: center; background: linear-gradient(#fff, #f6f6f6); border-radius: 4px; flex: none; }
.g1 { width: 151px; padding-left: 8px; padding-right: 4px; }
.g1 .open { margin-left: 4px; }
.g1 .caret { margin-left: 5px; }
.g1 .save { margin-left: 7px; }
.g1 .sep { margin-left: 4px; }
.g1 .undo { margin-left: 6px; }
.g2 { width: 548px; padding-left: 5px; padding-right: 6px; gap: 8px; }
.g3 { width: 663px; padding-left: 2px; gap: 8px; }
.g3 .sep { margin: 0 -3px 0 -2px; }
.tool { display: flex; align-items: center; gap: 3px; white-space: nowrap; flex: none; }
.tool .caret { margin-left: 3px; }
.combo { width: 62px; height: 23px; margin-right: -4px; border: 1px solid #888; display: flex; align-items: center; gap: 4px; padding-left: 2px; color: #888; flex: none; }
.combo .caret { margin-left: 2px; }

.body { flex: 1; min-height: 0; display: flex; }
.left { width: 168px; flex: none; padding-top: 1px; display: flex; flex-direction: column; }
.navhead { height: 15px; width: 165px; display: flex; justify-content: space-between; align-items: center; border: 1px solid #9a9a9a; border-left: 0; background: #fafafa; white-space: nowrap; }
.navbtns { display: flex; gap: 8px; padding-right: 3px; }
.navbtns svg { width: 10px; height: 12px; display: block; }
.navbtn { width: 165px; height: 22px; border: 1px solid #a9a9a9; background: #f0f0f0; padding: 0; flex: none; display: block; }
.navbtn.first { margin-top: 2px; }
.navbtn.b1 { margin-top: 1px; margin-bottom: 1px; }
.plusbar { margin-top: 2px; width: 165px; height: 26px; flex: none; display: flex; align-items: center; gap: 5px; padding-left: 7px; background: linear-gradient(#fff, #eee); }
.plusbar svg { width: 18px; height: 18px; display: block; }
.treeframe { background: #fff; border: 1px solid #8e8e8e; display: flex; overflow: hidden; position: relative; }
.navtree { margin-left: 2px; width: 161px; height: 488px; border-width: 1px 2px 2px 1px; }
.rows { flex: 1; min-width: 0; position: relative; overflow: hidden; }
.navtree .rows { padding-top: 1px; }
.trunk { position: absolute; left: 12px; top: 0; bottom: 0; border-left: 1px dotted #666; }
.nrow { height: 16px; display: flex; align-items: center; position: relative; white-space: nowrap; }
.hdot { border-top: 1px dotted #666; flex: none; }
.chev { width: 8px; height: 8px; display: block; flex: none; background: #fff; position: relative; z-index: 1; }
.nrow.folder { padding-left: 8px; }
.nrow.folder .hdot { width: 5px; margin-left: 3px; margin-right: 1px; }
.nrow.folder .lbl { gap: 4px; }
.nrow.child { padding-left: 32px; }
.nrow.child::before { content: ""; position: absolute; left: 31px; top: 0; bottom: 0; border-left: 1px dotted #666; }
.nrow.child.last::before { bottom: 50%; }
.nrow.child .hdot { width: 11px; }
.nrow.child .lbl { gap: 4px; margin-left: -3px; padding-left: 3px; }
.nrow.sel .lbl { background: #d9d9d9; width: 93px; }
.lbl { display: flex; align-items: center; height: 16px; }
.vbar { width: 15px; flex: none; background: #f0f0f0; display: flex; flex-direction: column; align-items: center; position: relative; }
.navbar { margin-right: 1px; }
.up, .dn { display: block; width: 10px; height: 12px; flex: none; }
.thumb { width: 15px; background: #cdcdcd; flex: none; }
.navbar .up { margin-top: 4px; }
.navbar .thumb { margin-top: 26px; height: 355px; }
.navbar .dn { margin-top: 73px; }

.work { flex: 1; min-width: 0; display: flex; flex-direction: column; margin-left: 2px; }
.actions { height: 27px; margin-top: 2px; flex: none; display: flex; align-items: center; gap: 6px; padding-left: 5px; background: linear-gradient(#fff, #f4f4f4); border-radius: 4px 0 0 4px; white-space: nowrap; overflow: hidden; }
.actions .caret { margin-left: 2px; }
.actions .tool { margin-right: 1px; }
.actions .sep { margin-left: 1px; }
.lay { margin-left: -4px; }
.layv { background: #fff; padding: 0 2px; }
.hact { color: #333; flex: none; }
.workrow { flex: 1; min-height: 0; display: flex; }
.mid { width: 184px; flex: none; margin-left: 2px; display: flex; flex-direction: column; padding-top: 5px; }
.searchrow { height: 23px; display: flex; flex: none; }
.searchbox { width: 156px; height: 23px; background: #fff; border: 1px solid #8a8a8a; color: #777; padding-left: 3px; line-height: 22px; }
.sbtn { width: 18px; height: 18px; margin: 3px 0 0 3px; }
.djtree { margin-top: 2px; height: 562px; width: 182px; border-width: 1px 2px 2px 2px; }
.drow { height: 16px; display: flex; align-items: center; position: relative; white-space: nowrap; padding-left: 24px; }
.djtree .rows { padding-top: 1px; }
.drow .hdot { width: 5px; margin-left: 5px; }
.drow .lbl { gap: 7px; margin-left: 1px; }
.gear { width: 12px; height: 12px; display: block; flex: none; }
.drow.end .hdot { width: 12px; margin-left: 5px; }
.drow.end::before { content: ""; position: absolute; left: 29px; top: 0; bottom: 50%; border-left: 1px dotted #666; }
.drow.child { padding-left: 49px; }
.drow.child .hdot { width: 12px; margin-left: 0; }
.drow.child .lbl { gap: 9px; margin-left: 0; }
.drow.child::before { content: ""; position: absolute; left: 48px; top: 0; bottom: 0; border-left: 1px dotted #666; }
.drow.child.last::before { bottom: 50%; }
.drow.child::after { content: ""; position: absolute; left: 29px; top: 0; bottom: 0; border-left: 1px dotted #666; }
.drow.sel .lbl { background: #2f66c4; color: #fff; height: 16px; padding-left: 4px; padding-right: 4px; margin-left: -4px; width: 57px; }
.djbar { margin-right: 1px; }
.djbar .up { margin-top: 5px; }
.djbar .thumb { margin-top: 416px; height: 110px; }
.djbar .dn { margin-top: 3px; }

.props { flex: 1; min-width: 0; background: #fff; margin-left: 4px; margin-right: 3px; display: flex; flex-direction: column; margin-bottom: 1px; border-left: 1px solid #c8c8c8; border-right: 1px solid #c8c8c8; }
.tabs { height: 21px; flex: none; background: #f0f0f0; border-bottom: 1px solid #b4b4b4; margin-right: -1px; }
.tab { display: block; width: 62px; height: 21px; background: #fff; border: 1px solid #c4c4c4; border-bottom: 0; margin-left: -1px; text-align: center; line-height: 20px; }
.pgrid { margin: 3px 0 0 1px; width: 800px; border: 1px solid #a6a6a6; border-width: 1px 0 0 1px; flex: 1; padding-left: 1px; }
.phead { height: 25px; display: flex; border-bottom: 1px solid #c4c4c4; }
.phead .pname { padding-left: 72px; line-height: 24px; }
.prow { height: 19px; display: flex; border-bottom: 1px solid #c4c4c4; }
.pno { width: 20px; flex: none; text-align: center; background: linear-gradient(#fff, #ececec); border-right: 1px solid #c4c4c4; line-height: 18px; font-size: 11.500px; }
.pname { flex: 1; padding-left: 21px; line-height: 18px; white-space: nowrap; position: relative; }
.pno.on { background: #ffd68c; color: #5a0a6a; }
.prow.sel .pname { background: #0078d7; color: #fff; }
.plus { position: absolute; left: 4px; top: 3px; width: 12px; height: 12px; border: 1px solid #999; font-style: normal; line-height: 10px; text-align: center; color: #111; }

.status { height: 23px; flex: none; display: flex; gap: 2px; padding-top: 4px; padding-bottom: 1px; background: #f0f0f0; }
.cell { height: 18px; background: #fafafa; border: 1px solid #dcdcdc; line-height: 16px; padding-left: 1px; white-space: nowrap; flex: none; }
.s1 { width: 148px; }
.s2 { width: 78px; }
.s3 { width: 98px; }
.s4 { width: 48px; padding-left: 2px; }
.s5 { width: 914px; padding-left: 1px; }
.s6 { width: 70px; }

.taskbar { height: 40px; flex: none; display: flex; background: #060c11; color: #fff; }
.start { width: 48px; background: #000; display: flex; align-items: center; justify-content: center; flex: none; }
.start svg { width: 16px; height: 16px; display: block; }
.tsearch { width: 344px; flex: none; background: #333; display: flex; align-items: center; padding-left: 9px; }
.ring { width: 20px; height: 20px; border: 2.500px solid #e8e8e8; border-radius: 50%; flex: none; }
.ph { margin-left: 7px; font-size: 14px; color: #8c8c8c; }
.mic { width: 12px; height: 18px; margin-left: 112px; display: block; }
.apps { display: flex; flex: none; width: 528px; padding-left: 5px; }
.app { width: 38px; height: 40px; flex: none; display: flex; align-items: center; justify-content: center; position: relative; }
.app svg { width: 22px; height: 24px; display: block; }
.fan { margin-left: 12px; }
.ie { margin-left: 14px; }
.spiral { margin-left: 10px; }
.spiral svg { width: 28px; height: 26px; }
.tsep { width: 2px; height: 22px; background: #3a3f44; margin: 9px 13px 0 -1px; flex: none; }
.run::after { content: ""; position: absolute; left: 4px; right: 4px; bottom: 0; height: 2px; background: #86c5f0; }
.active { background: #2b3238; }
.active::after { left: 0; right: 0; }
.tray { flex: 1; display: flex; align-items: center; position: relative; }
.tsep2 { width: 2px; height: 22px; background: #3a3f44; margin-left: 16px; flex: none; }
.link { margin-left: 11px; width: 45px; color: #ddd; flex: none; }
.cpu { width: 70px; flex: none; text-align: center; display: flex; flex-direction: column; margin-left: -14px; padding-top: 3px; color: #e8e8e8; line-height: 19px; }
.tr { display: block; flex: none; }
.chevup { width: 13px; height: 8px; margin-left: 9px; }
.bat { width: 17px; height: 14px; margin-left: 9px; }
.wifi { width: 15px; height: 14px; margin-left: 12px; }
.vol { width: 16px; height: 14px; margin-left: 7px; }
.kbd { width: 23px; height: 17px; margin-left: 9px; }
.ime { width: 22px; margin-left: 7px; font-size: 14px; text-align: center; flex: none; }
.traysg { width: 15px; height: 18px; margin-left: 6px; background: #f04818; border-radius: 3px; transform: rotate(-6deg); display: flex; align-items: center; justify-content: center; font-size: 14px; flex: none; }
.clock { width: 72px; margin-left: 15px; padding-top: 2px; display: flex; flex-direction: column; align-items: center; line-height: 19px; flex: none; color: #eee; }
.notif { width: 42px; position: relative; display: flex; justify-content: center; flex: none; }
.notif svg { width: 16px; height: 16px; display: block; }
.notif b { position: absolute; left: 22px; top: 7px; width: 16px; height: 16px; border-radius: 50%; background: #444; border: 1px solid #777; text-align: center; line-height: 14px; font-size: 11px; }

.ball { position: absolute; left: 1153px; top: -28px; width: 48px; height: 48px; border-radius: 50%; background: radial-gradient(circle at 50% 40%, #54c858, #38a848); border: 1px solid #d0d0d0; box-shadow: 0 1px 3px #888; color: #fff; display: flex; align-items: flex-end; justify-content: center; font-size: 12px; font-weight: bold; padding-bottom: 6px; }
.imebar { position: absolute; left: 879px; top: 4px; height: 28px; display: flex; align-items: flex-start; }
.sg { position: relative; z-index: 1; width: 22px; height: 25px; margin-top: 1px; background: #f04c1c; transform: rotate(-6deg); border-radius: 2px; display: flex; align-items: center; justify-content: center; color: #fff; font-size: 22px; }
.imepanel { margin-top: 3px; width: 184px; height: 24px; background: #f8fbff; border: 1px solid #c8dcec; display: flex; align-items: center; gap: 6px; padding-left: 11px; }
.imepanel svg { width: 16px; height: 16px; display: block; flex: none; }
.imepanel svg.wide { width: 20px; }
.zh { color: #1f72c8; font-weight: bold; font-size: 14px; flex: none; }
.pun { color: #1f72c8; font-weight: bold; width: 16px; flex: none; margin-left: 2px; }

.dialog { position: absolute; left: 461px; top: 95px; width: 745px; height: 582px; background: #f0f0f0; border: 1px solid #3c93e4; box-shadow: 0 2px 14px rgba(0, 0, 0, .35); display: flex; flex-direction: column; }
.dtitle { height: 24px; flex: none; background: #fff; display: flex; align-items: center; justify-content: space-between; padding: 0 9px 0 3px; }
.dtitle svg { width: 12px; height: 12px; display: block; }
.dbody { flex: 1; min-height: 0; display: flex; }
.dleft { position: relative; width: 481px; height: 497px; margin: 15px 0 0 9px; border: 1px solid #dcdcdc; flex: none; padding: 10px 0 0 4px; }
.legend { position: absolute; left: 6px; top: -9px; background: #f0f0f0; padding: 0; line-height: 16px; }
.cards { display: grid; grid-template-columns: repeat(3, 155px); grid-auto-rows: 158px; gap: 4px 3px; }
.card { background: #f0f0f0; border: 1px solid #fff; border-right-color: #a0a0a0; border-bottom-color: #a0a0a0; display: flex; align-items: center; padding-left: 6px; }
.card.picked { background: #00ffff; border-color: #00ffff; }
.pic { width: 140px; height: 140px; display: block; background: #6f90a8; flex: none; }
.bigpic { width: 210px; height: 210px; display: block; background: #6f90a8; margin: 9px 0 0 7px; }
.ttl { font-family: "Noto Sans CJK SC", sans-serif; font-weight: 300; }
.dl { font-family: "Liberation Serif", serif; fill: #f4f4f4; }
.dright { margin-left: 16px; width: 237px; flex: none; }
.pframe { margin: 9px 0 0 8px; width: 216px; height: 267px; background: #fff; border: 1px solid #a8a8a8; padding: 1px 3px 0 1px; }
.phdr { display: flex; height: 22px; }
.phdr .n { background: linear-gradient(#fff, #f0f0f0); }
.phdr .k { background: linear-gradient(#fff, #f0f0f0); text-align: center; line-height: 22px; border-right: 1px solid #c4c4c4; }
.phdr .v { background: linear-gradient(#f9dc9c, #f2c062); color: #5a0a6a; text-align: center; line-height: 22px; }
.prm { display: flex; height: 19px; border-top: 1px solid #c4c4c4; line-height: 18px; font-size: 11px; }
.prm:last-child { border-bottom: 1px solid #c4c4c4; height: 20px; }
.n { width: 20px; flex: none; text-align: center; border-right: 1px solid #c4c4c4; background: linear-gradient(#fff, #ececec); font-size: 11.500px; }
.k { width: 91px; flex: none; border-right: 1px solid #c4c4c4; padding-left: 2px; }
.prm .k { font-size: 12px; }
.v { flex: 1; padding-left: 2px; }
.phdr .k, .phdr .v { font-size: 12px; padding: 0; }
.cur .n { background: #ffd68c; color: #5a0a6a; }
.cur .k { background: #0078d7; color: #fff; }
.cur .v { background: #d6e8f8; }
.prevbox { position: relative; margin-top: 13px; height: 225px; border: 1px solid #dcdcdc; border-right: 0; }
.dfoot { height: 44px; flex: none; display: flex; justify-content: flex-end; gap: 15px; padding: 12px 14px 0 0; }
.dfoot button { width: 72px; height: 23px; background: #e1e1e1; border: 1px solid #adadad; padding: 0; }

.redmarks { position: absolute; left: 1054px; top: 120px; width: 140px; height: 250px; pointer-events: none; }
</style>
